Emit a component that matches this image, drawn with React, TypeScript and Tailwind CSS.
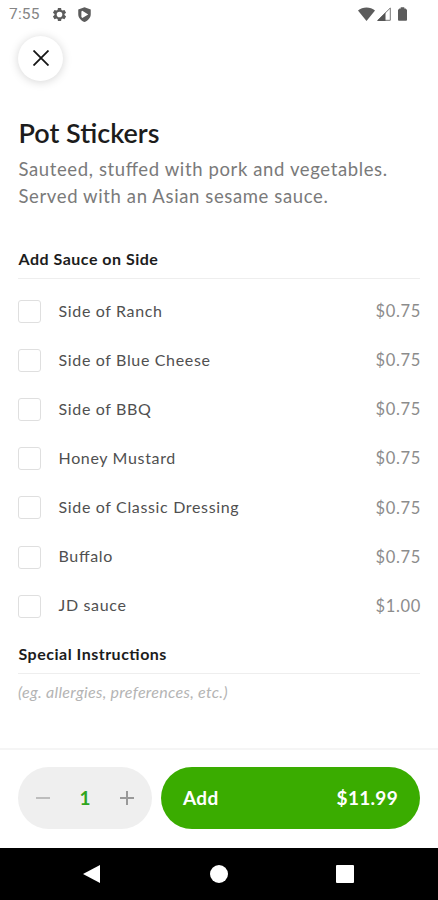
import React, { useState } from "react";

const sauces = [
  { name: "Side of Ranch", price: "$0.75" },
  { name: "Side of Blue Cheese", price: "$0.75" },
  { name: "Side of BBQ", price: "$0.75" },
  { name: "Honey Mustard", price: "$0.75" },
  { name: "Side of Classic Dressing", price: "$0.75" },
  { name: "Buffalo", price: "$0.75" },
  { name: "JD sauce", price: "$1.00" },
];

function StatusBar() {
  return (
    <div className="flex h-7 items-center justify-between pr-[31px] pl-[9px] text-[#5c5c5c]">
      <div className="flex items-center">
        <span className="w-[43px] font-[Roboto,sans-serif] text-[15.500px] leading-7 tracking-[0.2px] text-[#858585]">7:55</span>
        <svg className="h-[15px] w-[15px]" viewBox="0 0 24 24" fill="currentColor">
          <path fillRule="evenodd" d="M9.5 1.5h5l.6 3.2 1.8 1 3.1-1.1 2.5 4.4-2.5 2.1v1.8l2.5 2.1-2.5 4.4-3.1-1.1-1.8 1-.6 3.2h-5l-.6-3.2-1.8-1L4 19.4 1.5 15 4 12.9v-1.8L1.500 9 4 4.600l3.100 1.100 1.800-1zM12 7.500a4.500 4.500 0 1 0 0 9 4.500 4.500 0 0 0 0-9z" />
        </svg>
        <svg className="ml-[10px] h-[15px] w-[15px]" viewBox="0 0 24 24" fill="currentColor">
          <path fillRule="evenodd" d="M12 .5 22 4v7.500c0 5.500-4 10-10 12.500C6 21.500 2 17 2 11.500V4zM7 7v9l1.500 1.500L18 12 8.500 6z" />
        </svg>
      </div>
      <div className="flex items-center">
        <svg className="h-[14px] w-[17px]" viewBox="0 0 17 14" fill="currentColor">
          <path d="M0 3.500C4.500-.5 12.500-.5 17 3.500L8.500 14z" />
        </svg>
        <svg className="ml-[2px] h-[14px] w-[14px]" viewBox="0 0 14 14">
          <path d="M.8 13.300 13.300 1v12.300z" fill="none" stroke="#777" />
          <path d="M0 14 8.500 5.500V14z" fill="#555" />
        </svg>
        <svg className="ml-[7px] h-[14px] w-[9px]" viewBox="0 0 10 15" fill="currentColor">
          <path d="M3 0h4v1.500h1.500L10 3v11a1 1 0 0 1-1 1H1a1 1 0 0 1-1-1V3l1.500-1.500H3z" />
        </svg>
      </div>
    </div>
  );
}

function SectionTitle({ children }: { children: React.ReactNode }) {
  return (
    <h2 className="h-[31px] border-b border-[#eeeeee] pl-[0.500px] text-[16px] leading-[22px] font-bold tracking-[0.500px] text-[#1c1c1c]">
      {children}
    </h2>
  );
}

export default function App() {
  const [selected, setSelected] = useState<string[]>([]);
  const toggle = (name: string) =>
    setSelected((s) => (s.includes(name) ? s.filter((n) => n !== name) : [...s, name]));

  return (
    <div className="flex h-[900px] w-[438px] flex-col overflow-hidden bg-white font-[Lato,sans-serif] whitespace-nowrap [font-feature-settings:'liga'_1]">
      <StatusBar />
      <div className="px-[18px] pt-2">
        <button aria-label="Close" className="flex h-[45px] w-[45px] items-center justify-center rounded-full bg-white pb-px shadow-[0_1px_10px_rgba(0,0,0,0.17)]">
          <svg className="h-4 w-4" viewBox="0 0 16 16" stroke="#151515" strokeWidth="1.800">
            <path d="M.5.5l15 15M15.500.5l-15 15" />
          </svg>
        </button>
      </div>

      <main className="flex flex-1 flex-col px-[18px] pt-[36px]">
        <h1 className="pl-[0.500px] text-[27px] leading-8 font-semibold text-[#1c1c1c]">Pot Stickers</h1>
        <p className="mt-[7px] pl-[0.500px] text-[18.500px] leading-[27px] tracking-[0.620px] text-[#7a7a7a]">
          Sauteed, stuffed with pork and vegetables.
          <br />
          Served with an Asian sesame sauce.
        </p>

        <div className="mt-[38px]">
          <SectionTitle>Add Sauce on Side</SectionTitle>
        </div>
        <ul className="mt-2">
          {sauces.map((s) => (
            <li key={s.name} className="flex h-[49.100px] items-center" onClick={() => toggle(s.name)}>
              <span className={`h-[23px] w-[23px] rounded-[3px] border-[1.500px] border-[#dfdfdf] ${selected.includes(s.name) ? "bg-[#3aac00]" : "bg-white"}`} />
              <span className="ml-[17.500px] flex-1 pb-[2px] text-[16px] tracking-[0.660px] text-[#505050]">{s.name}</span>
              <span className="-mr-px text-[16.500px] tracking-[0.650px] text-[#8c8c8c]">{s.price}</span>
            </li>
          ))}
        </ul>
        <div className="mt-[12px]">
          <SectionTitle>Special Instructions</SectionTitle>
        </div>
        <p className="mt-[7px] text-[16px] leading-[22px] tracking-[0.300px] text-[#b4b4b4] italic">(eg. allergies, preferences, etc.)</p>
      </main>

      <footer className="flex h-[100px] shrink-0 gap-[9px] border-t-2 border-[#f5f5f5] px-[18px] pt-[17px]">
        <div className="flex h-[62px] w-[134px] items-center justify-between rounded-full bg-[#efefef] px-[18px]">
          <svg className="h-[14px] w-[14px]" viewBox="0 0 14 14" stroke="#bdbdbd" strokeWidth="2">
            <path d="M0 7h14" />
          </svg>
          <span className="text-[19px] font-bold text-[#2fa51e]">1</span>
          <svg className="h-[14px] w-[14px]" viewBox="0 0 14 14" stroke="#999999" strokeWidth="2">
            <path d="M0 7h14M7 0v14" />
          </svg>
        </div>
        <button className="flex h-[62px] flex-1 items-center justify-between rounded-full bg-[#3aac00] px-[22px] text-[19px] font-bold tracking-[0.300px] text-white">
          <span>Add</span>
          <span>$11.99</span>
        </button>
      </footer>

      <nav className="flex h-[52px] shrink-0 items-center justify-between bg-black pr-[84px] pl-[83px]">
        <svg className="h-[18px] w-[18px]" viewBox="0 0 18 18" fill="white">
          <path d="M17 0v18L0 9z" />
        </svg>
        <svg className="h-[18px] w-[18px]" viewBox="0 0 18 18" fill="white">
          <circle cx="9" cy="9" r="9" />
        </svg>
        <svg className="h-[18px] w-[18px]" viewBox="0 0 18 18" fill="white">
          <rect width="18" height="18" rx="1" />
        </svg>
      </nav>
    </div>
  );
}
